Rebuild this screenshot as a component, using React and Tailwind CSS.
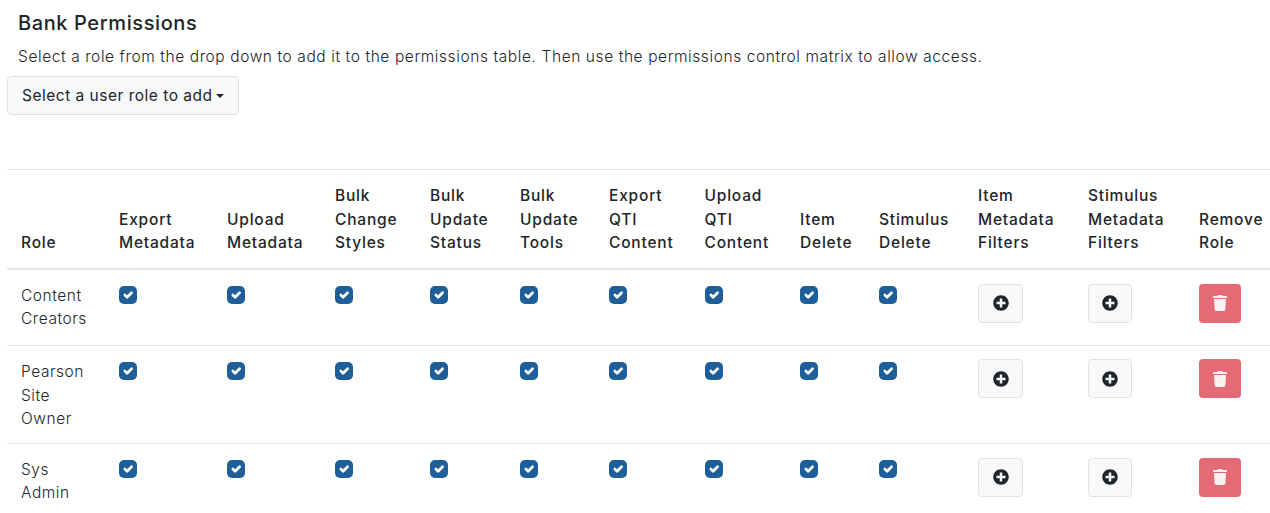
import React from "react";
import { FaPlusCircle, FaTrash } from "react-icons/fa";

const columns = [
  ["Role", "w-[100px]"],
  ["Export Metadata", "w-[108px]"],
  ["Upload Metadata", "w-[108px]"],
  ["Bulk Change Styles", "w-[95px]"],
  ["Bulk Update Status", "w-[90px]"],
  ["Bulk Update Tools", "w-[89px]"],
  ["Export QTI Content", "w-[95.5px]"],
  ["Upload QTI Content", "w-[95.5px]"],
  ["Item Delete", "w-[79px]"],
  ["Stimulus Delete", "w-[99px]"],
  ["Item Metadata Filters", "w-[110px]"],
  ["Stimulus Metadata Filters", "w-[111px]"],
  ["Remove Role", "w-[83px]"],
];

const roles = [
  { name: "Content Creators", height: "h-[77px]", pad: "pt-[14px]" },
  { name: "Pearson Site Owner", height: "h-[97px]", pad: "pt-[13px]" },
  { name: "Sys Admin", height: "h-[76px]", pad: "pt-[14px]" },
];

const Check = () => (
  <span className="flex h-[18px] w-[18px] items-center justify-center rounded-[5px] bg-[#1f5f99]">
    <svg viewBox="0 0 20 20" className="h-[18px] w-[18px]" fill="none">
      <path d="M6.5 10l2.5 2.5l5-5" stroke="#fff" strokeWidth="3" strokeLinecap="round" strokeLinejoin="round" />
    </svg>
  </span>
);

const FilterButton = ({ width }) => (
  <button
    type="button"
    className={`flex h-[39px] ${width} items-center justify-center rounded-[4px] border border-[#dee2e6] bg-[#f8f9fa] text-[#212529]`}
  >
    <FaPlusCircle className="h-[16px] w-[16px]" />
  </button>
);

const App = () => {
  return (
    <div className="h-[513px] w-[1270px] overflow-hidden bg-white font-['Inter',sans-serif] text-[15.5px] leading-[23.5px] tracking-[0.55px] text-[#212529]">
      <h2 className="ml-[18px] pt-[10px] text-[20px] leading-[26px] font-medium tracking-[0.6px]">Bank Permissions</h2>
      <p className="mt-[9px] ml-[18px] leading-[24px] font-light tracking-[0.59px]">
        Select a role from the drop down to add it to the permissions table. Then use the permissions control matrix to allow access.
      </p>
      <button
        type="button"
        className="mt-[7px] ml-[7px] flex h-[39px] w-[232px] items-center gap-[4px] rounded-[4px] border border-[#dee2e6] bg-[#f8f9fa] pl-[14px] tracking-[0.5px]"
      >
        Select a user role to add
        <span className="h-0 w-0 border-x-[4px] border-t-[4px] border-x-transparent border-t-[#212529]" />
      </button>
      <table className="mt-[54px] ml-[7px] w-[1263px] table-fixed border-collapse">
        <thead>
          <tr className="border-t border-b-2 border-t-[#dee2e6] border-b-[#e2e6ea]">
            {columns.map(([label, width], i) => (
              <th
                key={label}
                className={`${width} ${i === 0 ? "pl-[14px]" : "pl-[12px]"} pt-[14px] pr-0 pb-[13px] text-left align-bottom font-medium tracking-[0.8px]`}
              >
                {label}
              </th>
            ))}
          </tr>
        </thead>
        <tbody>
          {roles.map((role) => (
            <tr key={role.name} className={`${role.height} border-b border-[#dee2e6]`}>
              <td className="pt-[14px] pr-[12px] pb-[12px] pl-[14px] align-top font-light">{role.name}</td>
              {Array.from({ length: 9 }, (_, i) => (
                <td key={i} className="pt-[16px] pl-[12px] align-top">
                  <Check />
                </td>
              ))}
              <td className={`${role.pad} pl-[12px] align-top`}>
                <FilterButton width="w-[45px]" />
              </td>
              <td className={`${role.pad} pl-[12px] align-top`}>
                <FilterButton width="w-[44px]" />
              </td>
              <td className={`${role.pad} pl-[12px] align-top`}>
                <button
                  type="button"
                  className="flex h-[39px] w-[42px] items-center justify-center rounded-[4px] bg-[#e56a76] text-[#fdf0f1]"
                >
                  <FaTrash className="h-[16px] w-[14px]" />
                </button>
              </td>
            </tr>
          ))}
        </tbody>
      </table>
    </div>
  );
};

export default App;
